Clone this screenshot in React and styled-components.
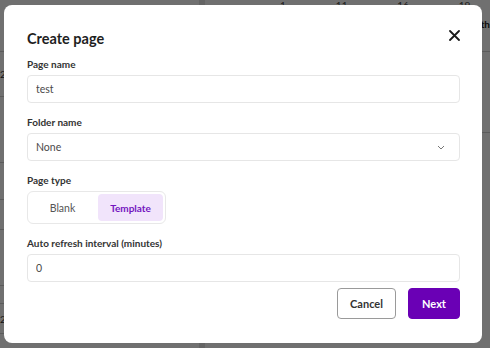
import React, { useState } from 'react';
import styled, { createGlobalStyle } from 'styled-components';

const GlobalStyle = createGlobalStyle`
  html, body {
    margin: 0;
    padding: 0;
    width: 490px;
    height: 348px;
    overflow: hidden;
    font-family: Lato, "Open Sans", sans-serif;
  }
  * { box-sizing: border-box; }
`;

const Page = styled.div`
  position: relative;
  width: 490px;
  height: 348px;
  background: #fff;
  display: grid;
  grid-template-columns: 205px 1fr;
  overflow: hidden;
`;

const SidePanel = styled.div`
  display: flex;
  flex-direction: column;
  border-right: 6px solid #e4e4e4;
`;

const Band = styled.div`
  height: ${(p) => p.h}px;
  border-bottom: 1px solid #d0d0d0;
  font-size: 10px;
  color: #333;
  display: flex;
  align-items: center;
`;

const ChartPanel = styled.div`
  display: flex;
  flex-direction: column;
`;

const AxisRow = styled.div`
  display: flex;
  gap: 30px;
  padding-left: 75px;
  height: 14px;
  font-size: 10px;
  line-height: 10px;
  color: #444;
`;

const RightEdge = styled.div`
  display: flex;
  justify-content: flex-end;
  font-size: 10px;
  font-weight: 700;
  color: #222;
  padding-top: 4px;
  height: 38px;
  border-bottom: 1px solid #d0d0d0;
`;

const Overlay = styled.div`
  position: absolute;
  inset: 0;
  background: rgba(0, 0, 0, 0.56);
`;

const Modal = styled.div`
  position: absolute;
  left: 4px;
  top: 5px;
  width: 478px;
  height: 338px;
  background: #fff;
  border-radius: 8px;
  padding: 24px 22px 23px 23px;
  display: flex;
  flex-direction: column;
`;

const Header = styled.div`
  display: flex;
  justify-content: space-between;
  align-items: flex-start;
  margin-bottom: 8px;
`;

const Title = styled.h2`
  margin: 0;
  font-size: 14.5px;
  line-height: 20px;
  font-weight: 700;
  color: #1e1e1e;
`;

const CloseButton = styled.button`
  border: none;
  background: none;
  padding: 0;
  margin: 0 0 0 0;
  width: 12px;
  height: 12px;
  display: flex;
  align-items: center;
  justify-content: center;
  cursor: pointer;
`;

const Field = styled.div`
  display: flex;
  flex-direction: column;
  margin-bottom: 12px;
`;

const Label = styled.label`
  font-size: 10px;
  line-height: 14px;
  font-weight: 700;
  color: #333;
  margin-bottom: 4px;
`;

const Input = styled.input`
  height: 28px;
  width: 100%;
  border: 1px solid #e6e6e6;
  border-radius: 4px;
  padding: 0 8px;
  font-family: inherit;
  font-size: 10.5px;
  color: #4a4a4a;
  outline: none;
`;

const SelectBox = styled.div`
  height: 28px;
  border: 1px solid #e6e6e6;
  border-radius: 4px;
  padding: 0 14px 0 8px;
  display: flex;
  align-items: center;
  justify-content: space-between;
  font-size: 10.5px;
  color: #4a4a4a;
`;

const Segmented = styled.div`
  display: inline-flex;
  align-self: flex-start;
  gap: 3px;
  padding: 2px;
  border: 1px solid #e8e8e8;
  border-radius: 6px;
`;

const SegmentButton = styled.button`
  width: 65px;
  height: 27px;
  border: none;
  border-radius: 4px;
  font-family: inherit;
  font-size: ${(p) => (p.$active ? 10 : 10.5)}px;
  font-weight: ${(p) => (p.$active ? 700 : 400)};
  color: ${(p) => (p.$active ? '#7414bf' : '#555')};
  background: ${(p) => (p.$active ? '#f1e4fb' : 'transparent')};
  cursor: pointer;
`;

const Footer = styled.div`
  display: flex;
  justify-content: flex-end;
  gap: 12px;
  margin-top: -6px;
`;

const Button = styled.button`
  height: 31px;
  width: ${(p) => (p.$primary ? 52 : 59)}px;
  padding: 0;
  border-radius: 4px;
  font-family: inherit;
  font-size: 11px;
  font-weight: 700;
  cursor: pointer;
  border: 1px solid ${(p) => (p.$primary ? '#6a00b5' : '#9a9a9a')};
  background: ${(p) => (p.$primary ? '#6a00b5' : '#fff')};
  color: ${(p) => (p.$primary ? '#fff' : '#333')};
`;

function CloseIcon() {
  return (
    <svg width="11" height="11" viewBox="0 0 11 11">
      <path d="M1 1 L10 10 M10 1 L1 10" stroke="#1a1a1a" strokeWidth="1.8" strokeLinecap="round" />
    </svg>
  );
}

function Chevron() {
  return (
    <svg width="8" height="5" viewBox="0 0 8 5">
      <path d="M1 1 L4 4 L7 1" fill="none" stroke="#777" strokeWidth="1" />
    </svg>
  );
}

export default function App() {
  const [type, setType] = useState('template');

  return (
    <Page>
      <GlobalStyle />
      <SidePanel>
        <Band h={52} />
        <Band h={45}>2</Band>
        <Band h={66} />
        <Band h={37} />
        <Band h={30} />
        <Band h={56} />
        <Band h={18} />
        <Band h={30}>2</Band>
      </SidePanel>
      <ChartPanel>
        <AxisRow>
          <span>1. Sep</span>
          <span>11. Sep</span>
          <span>16. Sep</span>
          <span>19. Sep</span>
        </AxisRow>
        <RightEdge>th</RightEdge>
        <Band h={81} />
      </ChartPanel>
      <Overlay />
      <Modal>
        <Header>
          <Title>Create page</Title>
          <CloseButton aria-label="Close">
            <CloseIcon />
          </CloseButton>
        </Header>

        <Field>
          <Label>Page name</Label>
          <Input defaultValue="test" />
        </Field>

        <Field>
          <Label>Folder name</Label>
          <SelectBox>
            <span>None</span>
            <Chevron />
          </SelectBox>
        </Field>

        <Field>
          <Label>Page type</Label>
          <Segmented>
            <SegmentButton $active={type === 'blank'} onClick={() => setType('blank')}>
              Blank
            </SegmentButton>
            <SegmentButton $active={type === 'template'} onClick={() => setType('template')}>
              Template
            </SegmentButton>
          </Segmented>
        </Field>

        <Field>
          <Label>Auto refresh interval (minutes)</Label>
          <Input defaultValue="0" />
        </Field>

        <Footer>
          <Button>Cancel</Button>
          <Button $primary>Next</Button>
        </Footer>
      </Modal>
    </Page>
  );
}
